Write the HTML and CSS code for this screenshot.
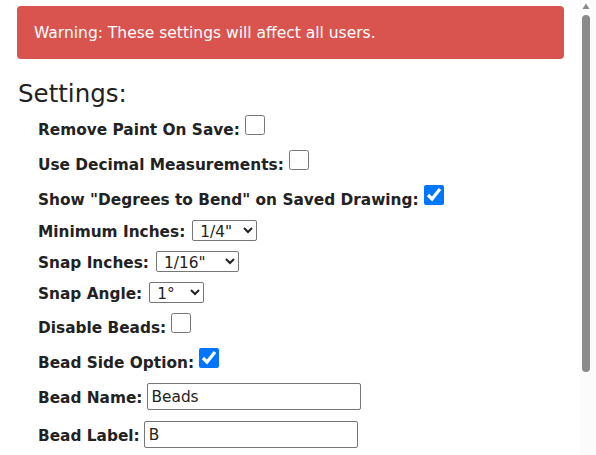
FILE: index.html
```html
<!DOCTYPE html>
<html lang="en">
<head>
<meta charset="utf-8">
<title>Settings</title>
<link rel="stylesheet" href="styles.css">
</head>
<body>
<div class="page">
  <div class="alert">Warning: These settings will affect all users.</div>
  <h2 class="title">Settings:</h2>
  <form class="settings">
    <div class="row row-cb"><label class="lbl" for="f1">Remove Paint On Save:</label><input class="chk" type="checkbox" id="f1"></div>
    <div class="row row-cb"><label class="lbl" for="f2">Use Decimal Measurements:</label><input class="chk" type="checkbox" id="f2"></div>
    <div class="row row-cb"><label class="lbl" for="f3">Show "Degrees to Bend" on Saved Drawing:</label><input class="chk" type="checkbox" id="f3" checked></div>
    <div class="row row-sel"><label class="lbl" for="f4">Minimum Inches:</label><select class="sel sel-min" id="f4"><option>1/4"</option><option>1/8"</option><option>1/2"</option></select></div>
    <div class="row row-sel"><label class="lbl" for="f5">Snap Inches:</label><select class="sel sel-snap" id="f5"><option>1/16"</option><option>1/8"</option><option>1/4"</option></select></div>
    <div class="row row-sel"><label class="lbl" for="f6">Snap Angle:</label><select class="sel sel-angle" id="f6"><option>1°</option><option>5°</option><option>15°</option></select></div>
    <div class="row row-cb"><label class="lbl" for="f7">Disable Beads:</label><input class="chk" type="checkbox" id="f7"></div>
    <div class="row row-cb"><label class="lbl" for="f8">Bead Side Option:</label><input class="chk" type="checkbox" id="f8" checked></div>
    <div class="row row-txt"><label class="lbl" for="f9">Bead Name:</label><input class="txt" type="text" id="f9" value="Beads"></div>
    <div class="row row-txt"><label class="lbl" for="f10">Bead Label:</label><input class="txt" type="text" id="f10" value="B"></div>
  </form>
</div>
<div class="scrollbar" aria-hidden="true">
  <svg class="scrollbar-svg" width="16" height="455" viewBox="0 0 16 455">
    <path d="M2.5 9 L6 3.5 L9.5 9 Z" fill="#8a8a8a"/>
    <rect x="2" y="15" width="8" height="357" rx="4" fill="#8b8b8b"/>
  </svg>
</div>
</body>
</html>
```
FILE: styles.css
```css
html {
  background: #fff;
}
body {
  margin: 0;
  font-family: "DejaVu Sans", Verdana, sans-serif;
  color: #222;
  overflow: hidden;
}
.page {
  padding: 6px 32px 0 17px;
}
.alert {
  background: #d9534f;
  color: #fff;
  font-size: 15.5px;
  border-radius: 4px;
  padding: 18px 17px 17px;
  line-height: 18px;
}
.title {
  margin: 21px 0 7px 1px;
  font-size: 24.5px;
  font-weight: normal;
  line-height: 28px;
}
.settings {
  margin: 0;
  padding-left: 21px;
}
.row {
  display: flex;
  align-items: flex-start;
  font-size: 15.35px;
  line-height: 18px;
}
.row-cb {
  margin-bottom: 11px;
}
.row-sel {
  margin-bottom: 10px;
}
.row-txt {
  margin-bottom: 11px;
}
.lbl {
  font-weight: bold;
  white-space: nowrap;
}
.row-cb .lbl {
  margin-top: 6px;
}
.row-sel .lbl {
  margin-top: 3px;
}
.row-txt .lbl {
  margin-top: 6px;
}
.chk {
  width: 20px;
  height: 20px;
  margin: 0 0 0 5px;
  flex: none;
}
.sel {
  margin: 0 0 0 7px;
  padding: 1px 0 0 3px;
  font-family: "DejaVu Sans", Verdana, sans-serif;
  font-size: 15.35px;
  height: 21px;
  border: 1px solid #767676;
  border-radius: 2px;
  background: #fff;
  color: #222;
  flex: none;
}
.sel-min { width: 65px; }
.sel-snap { width: 83px; }
.sel-angle { width: 55px; }
.txt {
  margin: 0 0 0 4px;
  width: 214px;
  height: 27px;
  box-sizing: border-box;
  padding: 3px 4px;
  font-family: "DejaVu Sans", Verdana, sans-serif;
  font-size: 15.35px;
  border: 1px solid #767676;
  border-radius: 2px;
  color: #222;
  flex: none;
}
.scrollbar {
  position: fixed;
  top: 0;
  right: 0;
  width: 16px;
  height: 100%;
  background: #fbfbfb;
}
.scrollbar-svg {
  display: block;
}
```
